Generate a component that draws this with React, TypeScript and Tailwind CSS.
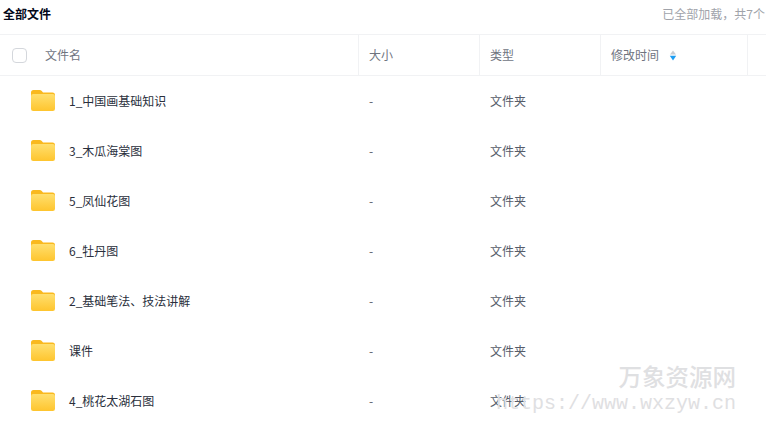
const rows = ["1_中国画基础知识", "3_木瓜海棠图", "5_凤仙花图", "6_牡丹图", "2_基础笔法、技法讲解", "课件", "4_桃花太湖石图"];

function Folder() {
  return (
    <svg width="24" height="21" viewBox="0 0 24 21" className="-mt-px shrink-0">
      <defs>
        <linearGradient id="folderFront" x1="0" y1="0" x2="0" y2="1">
          <stop offset="0" stopColor="#ffdf6e" />
          <stop offset="1" stopColor="#fec52e" />
        </linearGradient>
      </defs>
      <path d="M0 2.5A2.5 2.5 0 0 1 2.5 0h6c1 0 1.7.4 2.3 1.1L12 2.5h9.5A2.5 2.5 0 0 1 24 5v3H0z" fill="#f9b91f" />
      <rect x="0" y="4" width="24" height="17" rx="2.2" fill="url(#folderFront)" />
    </svg>
  );
}

function Sort() {
  return (
    <svg width="8" height="11" viewBox="0 0 8 11" className="ml-[10px] mt-px">
      <path d="M4 .5 7 4.5H1z" fill="#c9ccd1" />
      <path d="M4 10.5 .8 5.8h6.4z" fill="#1d9df2" />
    </svg>
  );
}

export default function App() {
  return (
    <div className="relative h-[437px] w-[766px] overflow-hidden bg-white font-['Noto_Sans_CJK_SC','Liberation_Sans',sans-serif] text-xs text-[#565c69]">
      <div className="flex h-[35px] items-start justify-between border-b border-[#f1f2f4] pl-[3px] pr-px pt-[6px]">
        <span className="font-bold text-[#03081a]">全部文件</span>
        <span className="text-[#a0a3aa]">已全部加载，共7个</span>
      </div>
      <div className="flex h-[41px] items-stretch border-b border-[#f1f2f4] text-[#6f747f]">
        <div className="flex w-[359px] items-center border-r border-[#f1f2f4] pl-3">
          <span className="h-[15px] w-[15px] rounded-[4px] border border-[#d4d7dc]" />
          <span className="ml-[18px]">文件名</span>
        </div>
        <div className="flex w-[121px] items-center border-r border-[#f1f2f4] pl-[10px]">大小</div>
        <div className="flex w-[121px] items-center border-r border-[#f1f2f4] pl-[10px]">类型</div>
        <div className="flex w-[147px] items-center border-r border-[#f1f2f4] pl-[10px]">
          修改时间
          <Sort />
        </div>
      </div>
      {rows.map((name) => (
        <div key={name} className="flex h-[50px] items-center">
          <div className="flex w-[359px] items-center gap-[14px] pl-[31px] text-[#2a2f3c]">
            <Folder />
            <span className="font-normal">{name}</span>
          </div>
          <div className="w-[121px] pl-[10px]">-</div>
          <div className="w-[121px] pl-[10px]">文件夹</div>
        </div>
      ))}
      <div className="pointer-events-none absolute left-[496px] top-[362px] w-[240px] text-right text-[#dfe0e2]">
        <div className="text-[23.5px] font-medium leading-[28px] font-['Noto_Sans_CJK_SC',sans-serif]">万象资源网</div>
        <div className="mt-[2px] font-['Liberation_Mono',monospace] text-[20px] leading-[24px]">https://www.wxzyw.cn</div>
      </div>
    </div>
  );
}
